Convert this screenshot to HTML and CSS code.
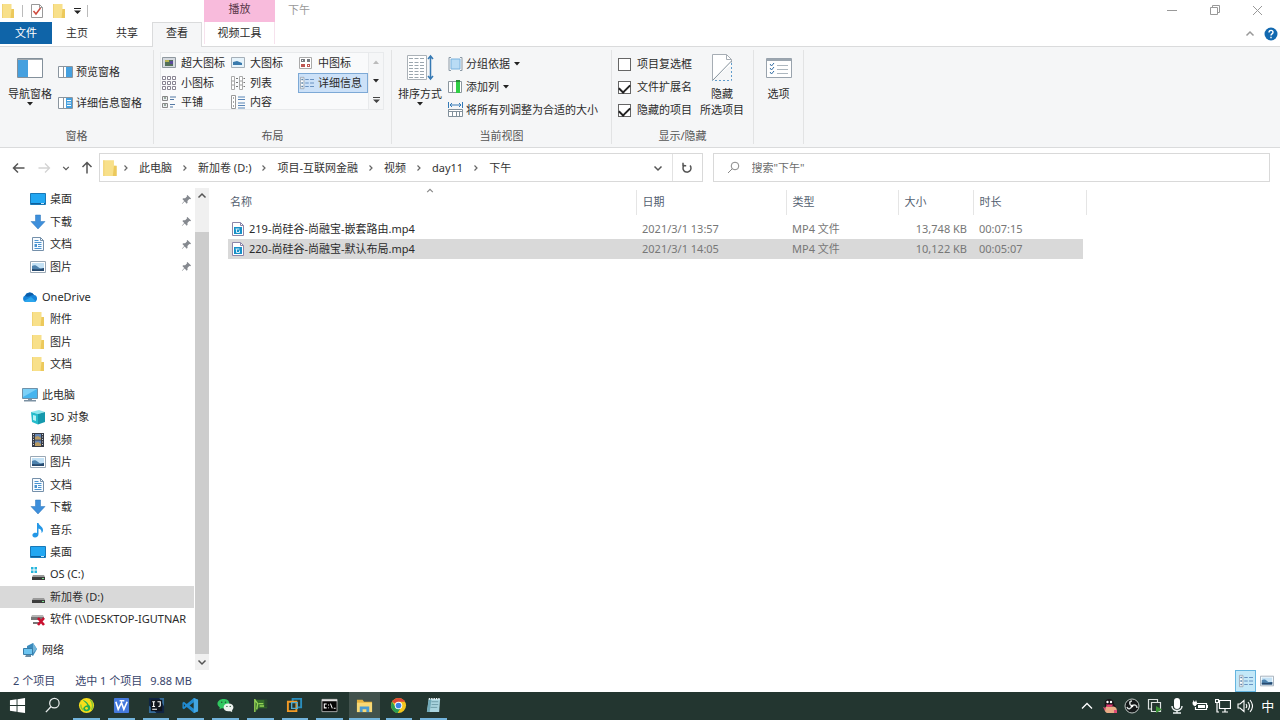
FILE: index.html
```html
<!DOCTYPE html>
<html lang="zh-CN">
<head>
<meta charset="utf-8">
<title>下午</title>
<link rel="stylesheet" href="styles.css">
</head>
<body>
<svg class="defs" width="0" height="0" aria-hidden="true">
  <symbol id="folder" viewBox="0 0 16 16"><path d="M2 1h9.500v5h1.500v9H2z" fill="#f8e08a"/><path d="M11.500 6H14v9h-3.500z" fill="#ecc95c"/><path d="M2 1h1v14H2z" fill="#f1d374"/></symbol>
  <symbol id="desktop" viewBox="0 0 16 16"><path d="M.5 2.500h15v11H.5z" fill="#22a7f2" stroke="#1979b8"/><path d="M1 12h14v1H1z" fill="#0e5f9c"/><path d="M11 12h3v1h-3z" fill="#c6e7fa"/></symbol>
  <symbol id="download" viewBox="0 0 16 16"><path d="M5.500 1h5v6.500H15L8 15 1 7.500h4.500z" fill="#3e8fdb" stroke="#2b74ba" stroke-width=".5"/></symbol>
  <symbol id="doc" viewBox="0 0 16 16"><path d="M2.500 1.500h8l3 3v10h-11z" fill="#f7fbff" stroke="#7590aa"/><path d="M10.500 1.500v3h3" fill="none" stroke="#7590aa"/><path d="M4.500 4.500h4M4.500 6.500h7M8 8.500h3.500M8 10.500h3.500M4.500 12.500h7" stroke="#4b94d0"/><path d="M4.500 8H7v3H4.500z" fill="#4b94d0"/></symbol>
  <symbol id="picture" viewBox="0 0 16 16"><path d="M.5 2.500h15v11H.5z" fill="#fff" stroke="#9aa8b5"/><path d="M2 4h12v8H2z" fill="#c3e1f5"/><path d="M2 7c2-1 4-1 6 1s4 1 6 1v3H2z" fill="#4d82ad"/><path d="M2 10c4 0 8 1 12-1v3H2z" fill="#26496e"/></symbol>
  <symbol id="cloud" viewBox="0 0 16 16"><path d="M3.500 13A3.500 3.500 0 0 1 3 6.500 5 5 0 0 1 12 6a3.600 3.600 0 0 1 .5 7z" fill="#1683d8"/><path d="M3 7a5 5 0 0 1 9-1C8.500 6 7 9 3 7z" fill="#0b5da9"/><path d="M2 12l7-4 5 4.500-1.500.5h-9z" fill="#2ba5ec"/></symbol>
  <symbol id="pc" viewBox="0 0 16 16"><path d="M.5 1.500h15v10H.5z" fill="#46b4ee" stroke="#6f91a9"/><path d="M1 2h14L1 10z" fill="#7cd0f7"/><path d="M6 12h4v1h4v1.500H2V13h4z" fill="#7c91a3"/></symbol>
  <symbol id="cube" viewBox="0 0 16 16"><path d="M1 3l8-2 6 2-7 2z" fill="#8ee7ee"/><path d="M1 3l7 2v10.500L2 13z" fill="#25bccb"/><path d="M8 5l7-2v10l-7 2.500z" fill="#1599ad"/><path d="M3 6l3 .7v5.300l-3-1z" fill="#b4f2f5"/></symbol>
  <symbol id="film" viewBox="0 0 16 16"><path d="M2 1h12v14H2z" fill="#363b46"/><path d="M5 2h6v5.500H5zM5 8.500h6V14H5z" fill="#6687b5"/><path d="M5 5l3-1 3 2v1.500H5zM5 11l3-1 3 2v2H5z" fill="#b99b62"/><path d="M3.500 2v12M12.500 2v12" stroke="#d2d6dc" stroke-dasharray="1 1.500"/></symbol>
  <symbol id="music" viewBox="0 0 16 16"><path d="M7 1h1.500c.5 3 4.500 3.500 4.500 7 0 1.500-.7 2.500-1.500 3 .5-3-1.500-4-3-4.500V12c0 2-1.500 3.500-3.500 3.500S2 14 2.500 12.500 5 10.500 7 11z" fill="#2497e6"/></symbol>
  <symbol id="drive" viewBox="0 0 16 16"><path d="M3 9h11l1 2H2z" fill="#9a9a9a"/><path d="M2 11h13v3H2z" fill="#3c3c3c"/><path d="M12 12h2v1h-2z" fill="#7be08c"/></symbol>
  <symbol id="osdrive" viewBox="0 0 16 16"><path d="M1 1h2.500v2.500H1zM4.500 1H7v2.500H4.500zM1 4.500h2.500V7H1zM4.500 4.500H7V7H4.500z" fill="#27b5dc"/><use href="#drive"/></symbol>
  <symbol id="netdrive" viewBox="0 0 16 16"><path d="M2 4h11l1 2H1z" fill="#b5b5b5"/><path d="M1 6h13v3H1zM3 11h6v2H3z" fill="#777"/><path d="M8 7l6 7M14 7l-6 7" stroke="#c9102f" stroke-width="2.600"/></symbol>
  <symbol id="network" viewBox="0 0 16 16"><path d="M5 4l6-3 4 6-4 7-6-4z" fill="#3b8bbd"/><path d="M11 1l4 6-4 4z" fill="#74b5d9"/><path d="M1.500 6.500h9v6h-9z" fill="#6cc4f0" stroke="#397da8"/><path d="M4 13h5v2H3z" fill="#6d8ba0"/></symbol>
  <symbol id="pin" viewBox="0 0 12 12"><path d="M7 1l4 4-1 .7-1-.2-2 2 .2 2-1 1L4 8.200 1.200 11 .9 10.700 3.500 7.700 1.500 5.500l1-1 2 .2 2-2L6.300 1.700z" fill="#85898f"/></symbol>
  <symbol id="chev-r" viewBox="0 0 8 8"><path d="M2.500 1.500L5 4 2.500 6.500" fill="none" stroke="#666" stroke-width="1.200"/></symbol>
  <symbol id="chev-d" viewBox="0 0 10 10"><path d="M1.500 3.500L5 7l3.500-3.500" fill="none" stroke="currentColor" stroke-width="1.500"/></symbol>
  <symbol id="chev-u" viewBox="0 0 10 10"><path d="M1.500 6.500L5 3l3.500 3.500" fill="none" stroke="currentColor" stroke-width="1.500"/></symbol>
  <symbol id="tri" viewBox="0 0 6 4"><path d="M0 0h6L3 3.500z" fill="currentColor"/></symbol>
  <symbol id="mp4" viewBox="0 0 14 16"><path d="M1.500 1.500h8l3 3v10h-11z" fill="#fff" stroke="#8d86a8"/><path d="M9.500 1.500v3h3" fill="none" stroke="#8d86a8"/><path d="M3 6h8v7H3z" fill="#1891c8"/><path d="M4.500 8h4M5.500 8v3.500M5.500 11.500h3V9.500" fill="none" stroke="#d5f1fc"/></symbol>
  <symbol id="details" viewBox="0 0 16 16"><path d="M.5 1.500h4v13h-4z" fill="#fff" stroke="#9aa5b1"/><path d="M1.500 4h2M1.500 8h2M1.500 12h2" stroke="#5d86ad" stroke-width="1.500"/><path d="M6 4h4M11.500 4H16M6 8h4M11.500 8H16M6 12h4M11.500 12H16" stroke="#5c87ba"/></symbol>
</svg>

<header>
  <div class="titlebar">
    <div class="quick">
      <svg width="16" height="16"><use href="#folder"/></svg>
      <i class="bar"></i>
      <button aria-label="属性"><svg width="14" height="16" viewBox="0 0 14 16"><path d="M1.500 1.500h8l3 3v10h-11z" fill="#fff" stroke="#999"/><path d="M9.500 1.500v3h3" fill="none" stroke="#999"/><path d="M3.500 8l2.500 3 4.500-6" fill="none" stroke="#cf4a3e" stroke-width="1.500"/></svg></button>
      <button aria-label="新建文件夹"><svg width="16" height="16"><use href="#folder"/></svg></button>
      <button aria-label="自定义快速访问工具栏"><svg width="7" height="6" viewBox="0 0 7 6"><path d="M0 0h7v1H0zM0 2.500h7L3.500 6z" fill="#222"/></svg></button>
      <i class="bar"></i>
    </div>
    <div class="context">播放</div>
    <div class="title">下午</div>
    <div class="winbtns">
      <button aria-label="最小化"><svg width="10" height="10"><path d="M0 5.500h10" stroke="#999"/></svg></button>
      <button aria-label="还原"><svg width="10" height="10"><path d="M.5 2.500h7v7h-7zM2.500 2.500v-2h7v7h-2" fill="none" stroke="#999"/></svg></button>
      <button aria-label="关闭"><svg width="11" height="11"><path d="M1 1l9 9M10 1l-9 9" stroke="#999"/></svg></button>
    </div>
  </div>
  <div class="tabs">
    <button class="file">文件</button><button>主页</button><button>共享</button><button class="current">查看</button><button class="video">视频工具</button>
    <div class="tabend">
      <button aria-label="折叠功能区"><svg class="grey" width="10" height="10"><use href="#chev-u"/></svg></button>
      <button aria-label="帮助"><svg width="14" height="14" viewBox="0 0 14 14"><circle cx="7" cy="7" r="6.500" fill="#1269b0"/><path d="M5 5.500c0-3 4-2.500 4-.3C9 7 7 6.800 7 8.500M7 9.800v1.400" fill="none" stroke="#fff" stroke-width="1.400"/></svg></button>
    </div>
  </div>
</header>

<section class="ribbon">
  <div class="group panes">
    <div class="tools">
      <button class="big"><svg width="28" height="28" viewBox="0 0 28 28"><path d="M1.500 4.500h25v19h-25z" fill="#fff" stroke="#83909b"/><path d="M2 5h10v18H2z" fill="#45a0df"/><path d="M2 5h24v1H2z" fill="#a2a9af"/></svg><span>导航窗格</span><svg class="caret" width="6" height="4"><use href="#tri"/></svg></button>
      <div class="pair">
        <button class="small"><svg width="16" height="14"><path d="M.5 1.500h14v11H.5zM5.500 2v10" fill="#fff" stroke="#8a959f"/><path d="M8 2h6v10H8z" fill="#45a0df"/></svg>预览窗格</button>
        <button class="small"><svg width="16" height="14"><path d="M.5 1.500h14v11H.5zM5.500 2v10" fill="#fff" stroke="#8a959f"/><path d="M8 2h6v10H8z" fill="#45a0df"/><path d="M9 4.500h4M9 7h4M9 9.500h4" stroke="#fff"/></svg>详细信息窗格</button>
      </div>
    </div>
    <div class="glabel">窗格</div>
  </div>

  <div class="group layout">
    <div class="tools">
      <div class="gallery">
        <button><svg width="14" height="14"><path d="M.5 1.500h13v10H.5z" fill="#d5dae0" stroke="#8f989f"/><path d="M3 4h8v6H3z" fill="#526f59"/><path d="M3 4h4v2H3z" fill="#b8b54f"/><path d="M8 5h3v3H8z" fill="#5a4b9a"/></svg>超大图标</button>
        <button><svg width="14" height="14"><path d="M.5 1.500h13v10H.5z" fill="#e6f3fb" stroke="#a5afb8"/><path d="M2 6l4-1 5 2v2H2z" fill="#397aad"/></svg>大图标</button>
        <button><svg width="14" height="14"><path d="M.5 1.500h12v11H.5z" fill="#fff" stroke="#aaa"/><path d="M2 3h4v3H2zM8 3h3v3H8z" fill="#777b80"/><path d="M2 8h4v3H2zM8 8h3v3H8z" fill="#bd5752"/><path d="M3 4h1v1H3zM9 9h1v1H9z" fill="#fff"/></svg>中图标</button>
        <button><svg width="14" height="14"><path d="M.5.5h3v3h-3zM5.500.5h3v3h-3zM10.500.5h3v3h-3zM.5 5.500h3v3h-3zM5.500 5.500h3v3h-3zM10.500 5.500h3v3h-3zM.5 10.500h3v3h-3zM5.500 10.500h3v3h-3zM10.500 10.500h3v3h-3z" fill="#fff" stroke="#888493"/></svg>小图标</button>
        <button><svg width="14" height="14"><path d="M.5.5h3v13h-3zM8.500.5h3v13h-3z" fill="#fff" stroke="#aaa"/><path d="M1 5h2M1 9h2M9 5h2M9 9h2" stroke="#999"/><path d="M5 2.500h2M5 6.500h2M5 10.500h2M12.500 2.500h1.500M12.500 6.500h1.500M12.500 10.500h1.500" stroke="#777"/></svg>列表</button>
        <button class="on"><svg width="16" height="14"><use href="#details"/></svg>详细信息</button>
        <button><svg width="14" height="14"><path d="M.5 1.500h5v4h-5zM.5 8.500h5v4h-5z" fill="#e9edf0" stroke="#888"/><path d="M8 2h6M8 4.500h4M8 9.500h5M8 12h3" stroke="#5378a4"/><path d="M2 3h2M2 10h2" stroke="#46644b"/></svg>平铺</button>
        <button><svg width="14" height="14"><path d="M.5.500h4v13h-4z" fill="#fff" stroke="#999"/><path d="M2 3h1M2 7h1M2 11h1" stroke="#555"/><path d="M7 2h7M7 4.500h7M7 8h7M7 10.500h7M7 13h7" stroke="#5985b6"/></svg>内容</button>
      </div>
      <div class="spin">
        <button aria-label="上一行"><svg class="pale" width="6" height="4" viewBox="0 0 6 4"><path d="M0 4h6L3 .5z" fill="currentColor"/></svg></button>
        <button aria-label="下一行"><svg width="6" height="4"><use href="#tri"/></svg></button>
        <button aria-label="更多"><svg width="7" height="6" viewBox="0 0 7 6"><path d="M0 0h7v1H0zM0 2.500h7L3.500 6z" fill="#444"/></svg></button>
      </div>
    </div>
    <div class="glabel">布局</div>
  </div>

  <div class="group view">
    <div class="tools">
      <button class="big"><svg width="28" height="28" viewBox="0 0 28 28"><path d="M1.500 1.500h19v24h-19z" fill="#fff" stroke="#aab1b7"/><path d="M3 4.500h16M3 8.500h16M3 11.500h16M3 14.500h16M3 17.500h16M3 20.500h16M3 23.500h16" stroke="#9ba6ae" stroke-dasharray="4 1.500"/><path d="M24.500 2v23M22 5l2.500-3L27 5M22 22l2.500 3 2.500-3" fill="none" stroke="#3679b3" stroke-width="1.500"/></svg><span>排序方式</span><svg class="caret" width="6" height="4"><use href="#tri"/></svg></button>
      <div class="triple">
        <button class="small"><svg width="16" height="14"><path d="M3 2h9v10H3z" fill="#b9dcf5" stroke="#7bb3df"/><path d="M3 .5H1v13h2M12 .5h2v13h-2" fill="none" stroke="#8c9aa6"/></svg>分组依据<svg class="caret" width="6" height="4"><use href="#tri"/></svg></button>
        <button class="small"><svg width="16" height="16"><path d="M.5 2.500h13v11H.5zM4.500 3v10" fill="#fff" stroke="#8b969e"/><path d="M8 2h4v12H8z" fill="#30ce45"/><path d="M8 1h4v2H8z" fill="#2b8c38"/></svg>添加列<svg class="caret" width="6" height="4"><use href="#tri"/></svg></button>
        <button class="small"><svg width="16" height="16"><path d="M.5 0v6M14.500 0v6M2 3h11M4 1L2 3l2 2M11 1l2 2-2 2" fill="none" stroke="#3279b7"/><path d="M.5 7.500h14v7H.5zM.5 9.500h14M4.500 10v5M8.500 10v5M11.500 10v5" fill="#fff" stroke="#82909b"/></svg>将所有列调整为合适的大小</button>
      </div>
    </div>
    <div class="glabel">当前视图</div>
  </div>

  <div class="group showhide">
    <div class="tools">
      <div class="triple">
        <label><input type="checkbox">项目复选框</label>
        <label><input type="checkbox" checked>文件扩展名</label>
        <label><input type="checkbox" checked>隐藏的项目</label>
      </div>
      <button class="big"><svg width="28" height="28" viewBox="0 0 28 28"><path d="M4.500.5h14l5 5v5L4.500 26z" fill="#fff"/><path d="M4.500 26V.5h14l5 5v3M18.500.5v5h5" fill="none" stroke="#a6adb4"/><path d="M4.500 26.500L23.500 7" stroke="#84919b"/><path d="M23.500 9v17.500h-19" fill="none" stroke="#609ccc" stroke-dasharray="2 2"/></svg><span>隐藏<br>所选项目</span></button>
    </div>
    <div class="glabel">显示/隐藏</div>
  </div>

  <div class="group options">
    <div class="tools">
      <button class="big"><svg width="28" height="28" viewBox="0 0 28 28"><path d="M1.500 4.500h25v19h-25z" fill="#fff" stroke="#99a3ad"/><path d="M2 5h24v2H2z" fill="#9ba6b0"/><path d="M5 10l1.500 2L9 9M5 14l1.500 2L9 13M5 18l1.500 2L9 17" fill="none" stroke="#346ea4"/><path d="M12 11.500h11M12 15.500h11M12 19.500h11" stroke="#adb7bf"/></svg><span>选项</span></button>
    </div>
  </div>
</section>

<div class="address">
  <div class="history">
    <button aria-label="后退"><svg width="13" height="12"><path d="M12.500 6H1.500M6 1.500L1.500 6 6 10.500" fill="none" stroke="#555" stroke-width="1.500"/></svg></button>
    <button aria-label="前进"><svg width="13" height="12"><path d="M.5 6h11M7 1.500L11.500 6 7 10.500" fill="none" stroke="#d3d3d3" stroke-width="1.300"/></svg></button>
    <button aria-label="最近浏览的位置"><svg class="dark" width="8" height="8"><use href="#chev-d"/></svg></button>
    <button aria-label="上移"><svg width="12" height="13"><path d="M6 12.500v-11M1.500 6L6 1.500 10.500 6" fill="none" stroke="#555" stroke-width="1.500"/></svg></button>
  </div>
  <nav class="path" aria-label="路径">
    <svg class="pathicon" width="18" height="18"><use href="#folder"/></svg>
    <svg width="8" height="8"><use href="#chev-r"/></svg><a href="#">此电脑</a>
    <svg width="8" height="8"><use href="#chev-r"/></svg><a href="#">新加卷 (D:)</a>
    <svg width="8" height="8"><use href="#chev-r"/></svg><a href="#">项目-互联网金融</a>
    <svg width="8" height="8"><use href="#chev-r"/></svg><a href="#">视频</a>
    <svg width="8" height="8"><use href="#chev-r"/></svg><a href="#">day11</a>
    <svg width="8" height="8"><use href="#chev-r"/></svg><a href="#">下午</a>
    <button class="drop" aria-label="以前的位置"><svg width="10" height="10"><use href="#chev-d"/></svg></button>
    <button class="refresh" aria-label="刷新"><svg width="12" height="12"><path d="M3.500 3A4 4 0 1 0 9 3.500M2 .8v3h3.200" fill="none" stroke="#555" stroke-width="1.500"/></svg></button>
  </nav>
  <label class="search"><svg width="13" height="13"><circle cx="8" cy="5" r="3.800" fill="none" stroke="#888"/><path d="M5.300 7.700L1 12" stroke="#888"/></svg><input type="text" placeholder="搜索&quot;下午&quot;" aria-label="搜索"></label>
</div>

<main>
  <aside>
    <nav class="tree" aria-label="导航窗格">
      <ul>
        <li><a href="#"><svg><use href="#desktop"/></svg><span>桌面</span><svg class="pin"><use href="#pin"/></svg></a></li>
        <li><a href="#"><svg><use href="#download"/></svg><span>下载</span><svg class="pin"><use href="#pin"/></svg></a></li>
        <li><a href="#"><svg><use href="#doc"/></svg><span>文档</span><svg class="pin"><use href="#pin"/></svg></a></li>
        <li><a href="#"><svg><use href="#picture"/></svg><span>图片</span><svg class="pin"><use href="#pin"/></svg></a></li>
        <li class="root"><a href="#"><svg><use href="#cloud"/></svg><span>OneDrive</span></a></li>
        <li><a href="#"><svg><use href="#folder"/></svg><span>附件</span></a></li>
        <li><a href="#"><svg><use href="#folder"/></svg><span>图片</span></a></li>
        <li><a href="#"><svg><use href="#folder"/></svg><span>文档</span></a></li>
        <li class="root"><a href="#"><svg><use href="#pc"/></svg><span>此电脑</span></a></li>
        <li><a href="#"><svg><use href="#cube"/></svg><span>3D 对象</span></a></li>
        <li><a href="#"><svg><use href="#film"/></svg><span>视频</span></a></li>
        <li><a href="#"><svg><use href="#picture"/></svg><span>图片</span></a></li>
        <li><a href="#"><svg><use href="#doc"/></svg><span>文档</span></a></li>
        <li><a href="#"><svg><use href="#download"/></svg><span>下载</span></a></li>
        <li><a href="#"><svg><use href="#music"/></svg><span>音乐</span></a></li>
        <li><a href="#"><svg><use href="#desktop"/></svg><span>桌面</span></a></li>
        <li><a href="#"><svg><use href="#osdrive"/></svg><span>OS (C:)</span></a></li>
        <li class="sel"><a href="#"><svg><use href="#drive"/></svg><span>新加卷 (D:)</span></a></li>
        <li><a href="#"><svg><use href="#netdrive"/></svg><span>软件 (\\DESKTOP-IGUTNAR</span></a></li>
        <li class="root"><a href="#"><svg><use href="#network"/></svg><span>网络</span></a></li>
      </ul>
    </nav>
    <div class="scroll">
      <button aria-label="向上滚动"><svg width="10" height="10"><use href="#chev-u"/></svg></button>
      <div class="thumb"></div>
      <button aria-label="向下滚动"><svg width="10" height="10"><use href="#chev-d"/></svg></button>
    </div>
  </aside>
  <div class="files">
    <table>
      <colgroup><col class="c-name"><col class="c-date"><col class="c-type"><col class="c-size"><col class="c-len"></colgroup>
      <thead><tr><th><svg class="sort" width="10" height="8" viewBox="0 0 10 10"><use href="#chev-u"/></svg>名称</th><th>日期</th><th>类型</th><th>大小</th><th>时长</th></tr></thead>
      <tbody>
        <tr><td><div class="fname"><svg width="14" height="16"><use href="#mp4"/></svg>219-尚硅谷-尚融宝-嵌套路由.mp4</div></td><td>2021/3/1 13:57</td><td>MP4 文件</td><td>13,748 KB</td><td>00:07:15</td></tr>
        <tr class="sel"><td><div class="fname"><svg width="14" height="16"><use href="#mp4"/></svg>220-尚硅谷-尚融宝-默认布局.mp4</div></td><td>2021/3/1 14:05</td><td>MP4 文件</td><td>10,122 KB</td><td>00:05:07</td></tr>
      </tbody>
    </table>
  </div>
</main>

<footer class="status">
  <span>2 个项目</span><span>选中 1 个项目</span><span>9.88 MB</span>
  <div class="modes">
    <button class="on" aria-label="详细信息"><svg width="16" height="14"><use href="#details"/></svg></button>
    <button aria-label="大图标"><svg width="14" height="14"><use href="#picture"/></svg></button>
  </div>
</footer>

<div class="taskbar">
  <div class="apps">
    <button aria-label="开始"><svg viewBox="0 0 18 18"><path d="M1 3.500l7-1v6H1zM9 2.300L17 1v7.500H9zM1 9.500h7v6l-7-1zM9 9.500h8V17l-8-1.200z" fill="#fff"/></svg></button>
    <button aria-label="搜索"><svg viewBox="0 0 18 18"><circle cx="11" cy="6.500" r="5" fill="none" stroke="#e8eceb" stroke-width="1.300"/><path d="M7.500 10L2 16" stroke="#e8eceb" stroke-width="1.400"/></svg></button>
    <button class="run" aria-label="QQ音乐"><svg viewBox="0 0 18 18"><circle cx="9" cy="9" r="8" fill="#f7df1b"/><path d="M5 3c2 1 5 2 6 5 3 2 3 6-1 7-4 1-6-3-3-5 1-1 2-1 3-1C9 6 6 5 5 3z" fill="#24ad53"/><path d="M13 3c3 3 3 8 1 11M3 8c0 3 1 5 3 6" fill="none" stroke="#8bc832" stroke-width="1.500"/><circle cx="9" cy="12" r="1.500" fill="#f7df1b"/></svg></button>
    <button class="run" aria-label="WPS"><svg viewBox="0 0 18 18"><rect x="1" y="1" width="16" height="16" rx="1" fill="#4579dc"/><path d="M3 5l2.500 8L9 6l2.500 7L15 5M7 4h5" fill="none" stroke="#fff" stroke-width="1.700"/></svg></button>
    <button class="run" aria-label="IntelliJ IDEA"><svg viewBox="0 0 18 18"><path d="M1 1h16v16H1z" fill="#102443"/><path d="M1 17V9l8 8zM17 1v9l-5-9z" fill="#356b98"/><path d="M3 3h12v12H3z" fill="#10141b"/><path d="M4.500 5h3M6 5v5M4.500 10h3M10 5h3v4q0 1-2 1M4.500 13h5" fill="none" stroke="#fff" stroke-width="1.200"/></svg></button>
    <button class="run" aria-label="Visual Studio Code"><svg viewBox="0 0 18 18"><path d="M12.500 1L17 3v12l-4.500 2L5 10.500 2 13 .5 12v-6L2 5l3 2.500zM12.500 5.500L8 9l4.500 3.500zM2 7.500v3L3.500 9z" fill="#218bd1" fill-rule="evenodd"/><path d="M12.500 1L17 3v12l-4.500 2z" fill="#43a6e2"/></svg></button>
    <button class="run" aria-label="微信"><svg viewBox="0 0 18 18"><path d="M7 2C3 2 .5 4.500.5 7c0 2 1 3 2.500 4l-.5 2L5 12c5 .5 8-1 8-5S10 2 7 2z" fill="#30c760"/><path d="M12 7c-3 0-5 1.800-5 4s2 4 5 4h2l2 1v-2c3-3 1-7-4-7z" fill="#edf2ee"/><g fill="#245332"><circle cx="5" cy="5.500" r=".8"/><circle cx="9" cy="5.500" r=".8"/><circle cx="10.500" cy="10" r=".7"/><circle cx="14" cy="10" r=".7"/></g></svg></button>
    <button class="run" aria-label="远程会话"><svg viewBox="0 0 18 18"><path d="M3 3h13v9H7l-3 3z" fill="#356f2b"/><path d="M3 2v14M3 3l3 4-1 6M7 7h5M8 9.500h5" fill="none" stroke="#94d355" stroke-width="1.500"/><path d="M13 3h3v8h-3z" fill="#26472b"/></svg></button>
    <button class="run" aria-label="VMware"><svg viewBox="0 0 18 18"><path d="M7 6V2h9v9h-4" fill="none" stroke="#2b8ebd" stroke-width="2"/><path d="M2 5h9v10H2z" fill="none" stroke="#f29a25" stroke-width="2"/><path d="M6 6h6v6H6z" fill="none" stroke="#53aacd" stroke-width="1.400"/></svg></button>
    <button class="run" aria-label="命令提示符"><svg viewBox="0 0 18 18"><path d="M1 2.500h16v13H1z" fill="#050505" stroke="#aaa"/><path d="M1 2.500h16v2H1z" fill="#ddd"/><path d="M6 7.500H3.500v4H6M8 8v1M8 11v1M10 7l2 5M13.500 12h2" fill="none" stroke="#fff" stroke-width="1.100"/></svg></button>
    <button class="run active" aria-label="文件资源管理器"><svg viewBox="0 0 18 18"><path d="M1 3h6l1.500 2H17v11H1z" fill="#e8b33e"/><path d="M1 6h16v10H1z" fill="#f9d875"/><path d="M4 16v-6h10v6h-3v-3H7v3z" fill="#4b9bd2"/></svg></button>
    <button class="run" aria-label="Google Chrome"><svg viewBox="0 0 18 18"><circle cx="9" cy="9" r="8" fill="#f3c51d"/><path d="M9 9L2.200 5A8 8 0 0 1 16 5H9z" fill="#df4938"/><path d="M2.200 5A8 8 0 0 0 8 17l4-6.500H6z" fill="#2b9c51"/><circle cx="9" cy="9" r="4" fill="#fff"/><circle cx="9" cy="9" r="3" fill="#3b82e5"/></svg></button>
    <button class="run" aria-label="记事本"><svg viewBox="0 0 18 18"><path d="M4 2h12l-1 14H2z" fill="#a9d4de"/><path d="M4 2h3L5 16H2z" fill="#71a9b7"/><path d="M7 5h7M7 8h7M6 11h7" stroke="#6e9ba8"/><path d="M4 2h12" stroke="#eef7f9" stroke-width="2" stroke-dasharray="1.500 1"/></svg></button>
  </div>
  <div class="tray">
    <button aria-label="显示隐藏的图标"><svg viewBox="0 0 16 16"><path d="M3 10.500l5-5 5 5" fill="none" stroke="#fff" stroke-width="1.300"/></svg></button>
    <button aria-label="QQ"><svg viewBox="0 0 16 16"><path d="M3 8C2 3 4 1 7 1s5 2 5 5l2 3-2 3H5z" fill="#171317"/><path d="M5 8c3 1 6 0 8 1 3 2 2 6-1 6H5c-3-1-3-5 0-7z" fill="#e9ac86"/><circle cx="5.500" cy="4" r="1.200" fill="#fff"/><circle cx="9" cy="4" r="1.200" fill="#fff"/><path d="M4 6.500h7l-1 2-5 .5z" fill="#e33c72"/><path d="M1 9l3 1-1 3zM12 12h3v3h-3z" fill="#df4d76"/></svg></button>
    <button aria-label="OBS"><svg viewBox="0 0 16 16"><circle cx="8" cy="8" r="7" fill="#15191a" stroke="#bfc7c4"/><path d="M8 3c-3 0-3 4 0 5 2-2 5-1 5 2M8 8c-1 3-4 4-5 1" fill="none" stroke="#d6dcda" stroke-width="1.500"/><circle cx="8" cy="8" r="1.300" fill="#fff"/></svg></button>
    <button aria-label="安全删除硬件"><svg viewBox="0 0 16 16"><path d="M4 11H1.500V1.500h9V4M4.500 4.500h9v9h-9z" fill="none" stroke="#dce2e0" stroke-width="1.200"/><path d="M9 8l6 3.500L9 15z" fill="#3d9538"/></svg></button>
    <button aria-label="麦克风"><svg viewBox="0 0 16 16"><rect x="5" y="0" width="6" height="11" rx="3" fill="#fff"/><path d="M3 8c0 6 10 6 10 0M8 12v3M4 15h8" fill="none" stroke="#e9eeee" stroke-width="1.500"/></svg></button>
    <button aria-label="电源"><svg viewBox="0 0 16 16"><path d="M5 5.500h9.500v6h-11V9" fill="none" stroke="#fff" stroke-width="1.200"/><path d="M6 7h7v3H6zM15 7h1v3h-1z" fill="#fff"/><path d="M1 4h3.500v2.500L3 8 1 6.500zM1.500 2.500V4M4 2.500V4" fill="#fff" stroke="#fff" stroke-width=".8"/></svg></button>
    <button aria-label="网络"><svg viewBox="0 0 16 16"><path d="M4.500 2.500h11v8h-11zM10 11v3M7 14h6M.5 1.500h3v3h-3zM2 5v9h2" fill="none" stroke="#fff" stroke-width="1.200"/></svg></button>
    <button aria-label="音量"><svg viewBox="0 0 16 16"><path d="M1 6h2l4-3.500v11L3 10H1zM9 6q1.500 2 0 4M11 4q3 4 0 8M13 2q5 6 0 12" fill="none" stroke="#fff" stroke-width="1.100"/></svg></button>
    <button class="ime">中</button>
  </div>
</div>
</body>
</html>
```
FILE: styles.css
```css
* { box-sizing: border-box; }
body {
  margin: 0;
  height: 100vh;
  display: flex;
  flex-direction: column;
  overflow: hidden;
  background: #fff;
  color: #2b2b2b;
  font: 11px/16px "Noto Sans", "Noto Sans CJK SC", sans-serif;
}
button, input { font: inherit; color: inherit; }
button {
  border: 0;
  padding: 0;
  background: none;
  display: flex;
  align-items: center;
  justify-content: center;
  white-space: nowrap;
}
a { color: inherit; text-decoration: none; }
svg { flex: none; display: block; }
.defs { position: absolute; }
.caret { color: #222; }
.grey { color: #999; }
.dark { color: #555; }
.pale { color: #bbb; }

/* Title bar and tabs */
.titlebar { display: flex; height: 22px; }
.quick { width: 204px; display: flex; align-items: center; gap: 7px; }
.quick .bar { width: 1px; height: 12px; margin-left: -1px; background: #bbb; }
.context { width: 71px; background: #f8bbdc; color: #573749; text-align: center; line-height: 18px; }
.title { padding-left: 13px; line-height: 20px; color: #999; }
.winbtns { margin-left: auto; display: flex; padding-right: 1px; }
.winbtns button { width: 43px; height: 20px; }
.tabs { display: flex; height: 25px; border-bottom: 1px solid #dadbdc; }
.tabs > button { width: 50px; height: 22px; }
.tabs > .file { width: 52px; background: #0f64a8; color: #fff; }
.tabs > .current { height: 25px; padding-bottom: 4px; background: #f5f6f7; border: 1px solid #dadbdc; border-bottom: 0; }
.tabs > .video { width: 71px; margin-left: 2px; border: solid #f6e2ed; border-width: 0 1px; }
.tabend { margin-left: auto; display: flex; align-items: center; gap: 9px; padding-right: 2px; }

/* Ribbon */
.ribbon { display: flex; height: 101px; flex: none; background: #f5f6f7; border-bottom: 1px solid #dadbdc; }
.group { display: flex; flex-direction: column; margin: 3px 0; border-right: 1px solid #e2e3e4; }
.tools { display: flex; flex: 1; }
.glabel { height: 16px; text-align: center; color: #555; }
.panes { width: 154px; }
.layout { width: 238px; }
.view { width: 220px; }
.showhide { width: 142px; }
.options { width: 50px; }
.big { flex-direction: column; justify-content: flex-start; align-self: flex-start; padding-top: 4px; }
.big span { padding-top: 4px; }
.panes .big { width: 60px; }
.view .big { width: 56px; }
.showhide .big { width: 60px; }
.options .big { width: 49px; }
.small { gap: 2px; }
.small .caret { margin-left: 2px; }
.pair { display: flex; flex-direction: column; align-items: flex-start; gap: 15px; padding-top: 14px; margin-left: -2px; }
.triple { display: flex; flex-direction: column; align-items: flex-start; gap: 7px; padding-top: 6px; }
.triple > * { height: 16px; }
.gallery {
  display: grid;
  grid-template-columns: 69px 68px 70px;
  grid-template-rows: 20px 20px 18px;
  height: 58px;
  margin: 2px 0 0 6px;
  border: solid #e8eaec;
  border-width: 1px 0 1px 1px;
  background: #f9fafb;
}
.gallery button { justify-content: flex-start; padding-left: 1px; gap: 5px; }
.gallery .on { border: 1px solid #7da9d6; background: #cce1f8; gap: 3px; padding-left: 0; }
.spin { display: flex; flex-direction: column; width: 16px; height: 58px; margin-top: 2px; border: 1px solid #e8eaec; }
.spin button { flex: 1; }
.showhide .triple { padding-left: 6px; }
label { display: flex; align-items: center; gap: 6px; white-space: nowrap; }
input[type="checkbox"] { appearance: none; width: 13px; height: 13px; margin: 0; border: 1px solid #666; background: #fff; display: grid; place-items: center; }
input[type="checkbox"]:checked::before { content: ""; width: 5px; height: 9px; margin-bottom: 2px; border: solid #222; border-width: 0 2px 2px 0; transform: rotate(45deg); }

/* Address bar */
.address { display: flex; flex: none; height: 39px; padding: 5px 10px 5px 0; }
.history { width: 99px; display: flex; align-items: center; gap: 11px; padding-left: 12px; }
.history button:nth-child(2) { padding-left: 2px; }
.path { flex: 610 1 0; display: flex; align-items: center; gap: 9px; border: 1px solid #d9d9d9; padding-left: 1px; color: #333; }
.path .pathicon { margin-right: -6px; }
.drop { margin-left: auto; color: #555; }
.refresh { align-self: stretch; width: 30px; border-left: 1px solid #e2e2e2; }
.search { flex: 551 1 0; margin-left: 10px; border: 1px solid #d9d9d9; padding-left: 13px; gap: 12px; }
.search input { flex: 1; border: 0; padding: 0; background: none; outline: 0; }
.search input::placeholder { color: #6d6d6d; opacity: 1; }

/* Body */
main { flex: 1; min-height: 0; display: flex; }
aside { width: 210px; display: flex; padding-top: 1px; }
.tree { width: 194px; }
.tree ul { list-style: none; margin: 0; padding: 0 0 9px; height: 100%; display: flex; flex-direction: column; }
.tree li { flex: 1; max-height: 23px; min-height: 20px; padding-left: 30px; overflow: hidden; }
.tree .root { padding-left: 22px; margin-top: 8px; }
.tree .sel, tr.sel td { background: #d9d9d9; }
.tree a { height: 100%; display: flex; align-items: center; gap: 4px; white-space: nowrap; }
.tree svg { width: 16px; height: 16px; }
.tree .pin { width: 11px; height: 11px; margin-left: auto; margin-right: 2px; }
.scroll { width: 14px; margin-left: 1px; display: flex; flex-direction: column; background: #f0f0f0; color: #555; }
.scroll button { height: 16px; }
.thumb { flex: 1; margin-top: 28px; background: #cdcdcd; }
.files { flex: 1; padding: 3px 0 0 18px; }
table { table-layout: fixed; width: 858px; border-collapse: collapse; }
.c-name { width: 408px; }
.c-date { width: 150px; }
.c-type { width: 112px; }
.c-size { width: 75px; }
.c-len { width: 113px; }
th { position: relative; height: 25px; padding: 0 0 2px 6px; border-right: 1px solid #e5e5e5; text-align: left; font-weight: 400; color: #53606f; }
th:first-child { padding-left: 2px; }
thead::after { content: ""; display: block; height: 4px; }
.sort { position: absolute; top: -3px; left: 197px; color: #888; }
td { height: 20px; padding: 0 6px; color: #777; white-space: nowrap; }
td:first-child { padding: 0 0 0 3px; color: #2b2b2b; }
td:nth-child(4) { text-align: right; }
td:last-child { border-right: 6px solid #fff; }
.fname { display: flex; align-items: center; gap: 4px; }

/* Status bar */
.status { flex: none; display: flex; align-items: center; gap: 8px; height: 22px; padding-left: 13px; color: #38456b; }
.status span:first-child { margin-right: 12px; }
.modes { margin-left: auto; display: flex; padding-right: 3px; }
.modes button { width: 21px; height: 22px; }
.modes .on { border: 1px solid #65b5df; background: #c3e8f8; }

/* Taskbar */
.taskbar { flex: none; display: flex; justify-content: space-between; height: 28px; background: #233630; color: #fff; }
.apps { display: grid; grid-template-columns: repeat(13, 1fr); width: 451px; }
.apps button { margin: 0 4px; border-bottom: 2px solid transparent; }
.apps svg { width: 17px; height: 17px; }
.apps .run { border-color: #73b4dc; }
.apps .active { margin: 0 2px; background: #42524d; }
.tray { display: grid; grid-template-columns: repeat(9, 1fr); width: 204px; padding-right: 1px; }
.tray svg { width: 16px; height: 16px; }
.ime { font-size: 13px; }
```
